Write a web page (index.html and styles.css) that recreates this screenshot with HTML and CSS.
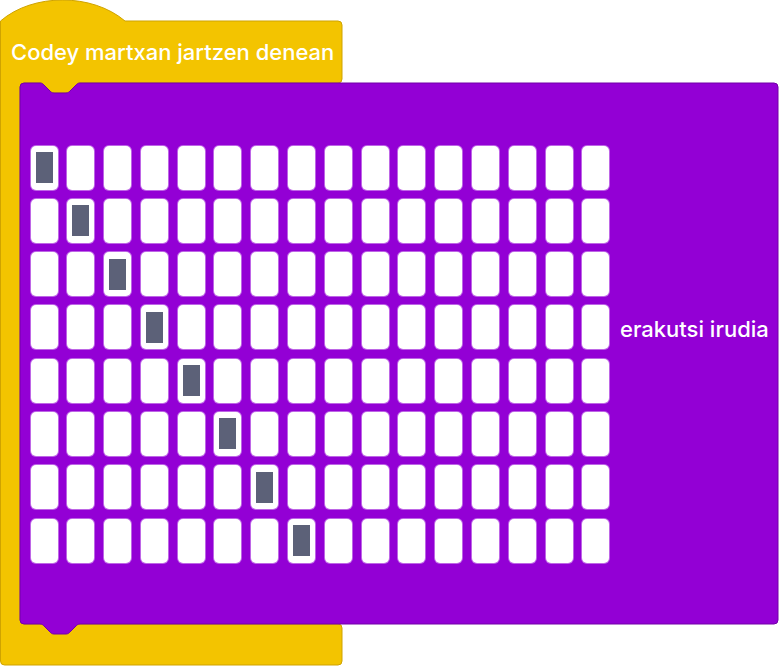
FILE: index.html
```html
<!DOCTYPE html>
<html lang="eu">
<head>
    <meta charset="UTF-8">
    <meta name="viewport" content="width=device-width, initial-scale=1.0">
    <title>Codey - erakutsi irudia</title>
    <link rel="stylesheet" href="styles.css">
</head>
<body>

    <div class="script">
        <!-- block shapes, drawn behind the content -->
        <svg class="shapes" width="779" height="666" viewBox="0 0 779 666">
            <path class="hat" d="M0.5,21 C33,-7 92,-7 125,21 H338 a4,4 0 0 1 4,4 V79 a4,4 0 0 1 -4,4 H80 c-2,0 -3,1 -4,2 L70,91 c-1,1 -2,2 -4,2 H54 c-2,0 -3,-1 -4,-2 L44,85 c-1,-1 -2,-2 -4,-2 H24 a4,4 0 0 0 -4,4 V620 a4,4 0 0 0 4,4 H338 a4,4 0 0 1 4,4 V661 a4,4 0 0 1 -4,4 H4.5 a4,4 0 0 1 -4,-4 Z"/>
            <path class="looks" d="M20,87 a4,4 0 0 1 4,-4 H40 c2,0 3,1 4,2 L50,91 c1,1 2,2 4,2 H66 c2,0 3,-1 4,-2 L76,85 c1,-1 2,-2 4,-2 H774 a4,4 0 0 1 4,4 V620 a4,4 0 0 1 -4,4 H80 c-2,0 -3,1 -4,2 L70,632 c-1,1 -2,2 -4,2 H54 c-2,0 -3,-1 -4,-2 L44,626 c-1,-1 -2,-2 -4,-2 H24 a4,4 0 0 1 -4,-4 Z"/>
        </svg>

        <div class="hat-label">Codey martxan jartzen denean</div>

        <div class="block">
            <div class="matrix">
                <span class="led on"></span><span class="led"></span><span class="led"></span><span class="led"></span><span class="led"></span><span class="led"></span><span class="led"></span><span class="led"></span><span class="led"></span><span class="led"></span><span class="led"></span><span class="led"></span><span class="led"></span><span class="led"></span><span class="led"></span><span class="led"></span>
                <span class="led"></span><span class="led on"></span><span class="led"></span><span class="led"></span><span class="led"></span><span class="led"></span><span class="led"></span><span class="led"></span><span class="led"></span><span class="led"></span><span class="led"></span><span class="led"></span><span class="led"></span><span class="led"></span><span class="led"></span><span class="led"></span>
                <span class="led"></span><span class="led"></span><span class="led on"></span><span class="led"></span><span class="led"></span><span class="led"></span><span class="led"></span><span class="led"></span><span class="led"></span><span class="led"></span><span class="led"></span><span class="led"></span><span class="led"></span><span class="led"></span><span class="led"></span><span class="led"></span>
                <span class="led"></span><span class="led"></span><span class="led"></span><span class="led on"></span><span class="led"></span><span class="led"></span><span class="led"></span><span class="led"></span><span class="led"></span><span class="led"></span><span class="led"></span><span class="led"></span><span class="led"></span><span class="led"></span><span class="led"></span><span class="led"></span>
                <span class="led"></span><span class="led"></span><span class="led"></span><span class="led"></span><span class="led on"></span><span class="led"></span><span class="led"></span><span class="led"></span><span class="led"></span><span class="led"></span><span class="led"></span><span class="led"></span><span class="led"></span><span class="led"></span><span class="led"></span><span class="led"></span>
                <span class="led"></span><span class="led"></span><span class="led"></span><span class="led"></span><span class="led"></span><span class="led on"></span><span class="led"></span><span class="led"></span><span class="led"></span><span class="led"></span><span class="led"></span><span class="led"></span><span class="led"></span><span class="led"></span><span class="led"></span><span class="led"></span>
                <span class="led"></span><span class="led"></span><span class="led"></span><span class="led"></span><span class="led"></span><span class="led"></span><span class="led on"></span><span class="led"></span><span class="led"></span><span class="led"></span><span class="led"></span><span class="led"></span><span class="led"></span><span class="led"></span><span class="led"></span><span class="led"></span>
                <span class="led"></span><span class="led"></span><span class="led"></span><span class="led"></span><span class="led"></span><span class="led"></span><span class="led"></span><span class="led on"></span><span class="led"></span><span class="led"></span><span class="led"></span><span class="led"></span><span class="led"></span><span class="led"></span><span class="led"></span><span class="led"></span>
            </div>
            <span class="block-label">erakutsi irudia</span>
        </div>
    </div>

</body>
</html>
```

FILE: styles.css
```css
body {
    margin: 0;
    background: #fff;
    font-family: Inter, "Liberation Sans", sans-serif;
}
.script {
    position: relative;
    width: 779px;
    height: 666px;
    box-sizing: border-box;
    padding-top: 21px;
    color: #fff;
}
.shapes {
    position: absolute;
    left: 0;
    top: 0;
}
.hat {
    fill: #f3c400;
    stroke: #cfa300;
    stroke-width: 1;
}
.looks {
    fill: #9300d5;
    stroke: #7300a8;
    stroke-width: 1;
}
.hat-label {
    position: relative;
    height: 62px;
    padding-left: 11px;
    display: flex;
    align-items: center;
    font-size: 22px;
    font-weight: 500;
}
.block {
    position: relative;
    margin-left: 20px;
    width: 758px;
    height: 541px;
    box-sizing: border-box;
    padding: 62.5px 0 0 10.5px;
    display: flex;
    align-items: flex-start;
    gap: 10.5px;
}
.matrix {
    display: grid;
    grid-template-columns: repeat(16, 27px);
    grid-auto-rows: 44px;
    column-gap: 9.8px;
    row-gap: 9.3px;
}
.led {
    background: #fff;
    border-radius: 5px;
    box-shadow: 0 0 0 1px rgba(255, 255, 255, 0.4);
    display: flex;
    align-items: center;
    justify-content: center;
}
.led.on::after {
    content: "";
    width: 17px;
    height: 31px;
    background: #5c6178;
}
.block-label {
    margin-top: 170px;
    font-size: 22px;
    font-weight: 500;
    white-space: nowrap;
}
```
